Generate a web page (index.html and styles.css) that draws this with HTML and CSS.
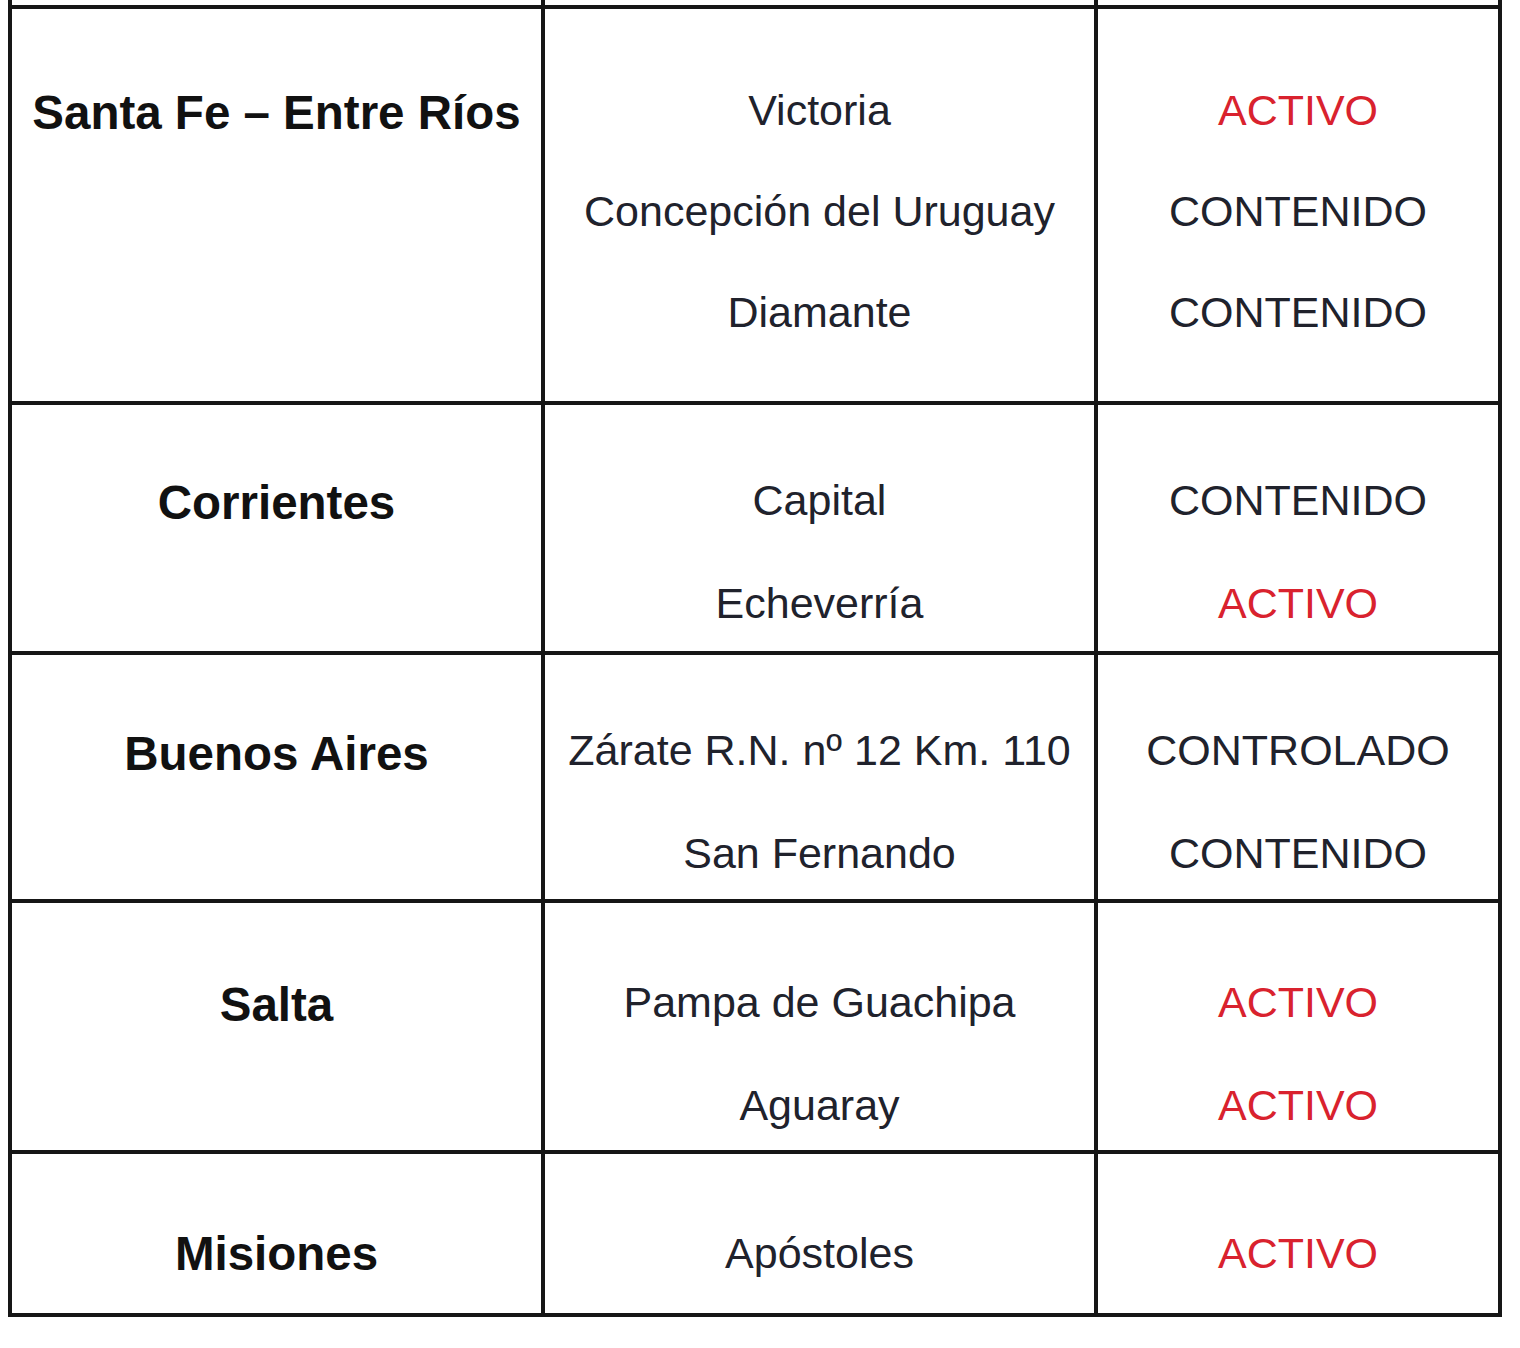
FILE: index.html
```html
<!DOCTYPE html>
<html lang="es">
<head>
<meta charset="utf-8">
<title>Estado</title>
<link rel="stylesheet" href="styles.css">
</head>
<body>
<div class="page">
<table class="grid">
  <colgroup>
    <col class="c1"><col class="c2"><col class="c3">
  </colgroup>
  <tr class="stub"><td></td><td></td><td></td></tr>
  <tr class="r1">
    <td class="prov">Santa Fe – Entre Ríos</td>
    <td class="loc"><div class="ln">Victoria</div><div class="ln">Concepción del Uruguay</div><div class="ln">Diamante</div></td>
    <td class="st"><div class="ln red">ACTIVO</div><div class="ln">CONTENIDO</div><div class="ln">CONTENIDO</div></td>
  </tr>
  <tr class="r2">
    <td class="prov">Corrientes</td>
    <td class="loc"><div class="ln">Capital</div><div class="ln">Echeverría</div></td>
    <td class="st"><div class="ln">CONTENIDO</div><div class="ln red">ACTIVO</div></td>
  </tr>
  <tr class="r3">
    <td class="prov">Buenos Aires</td>
    <td class="loc"><div class="ln">Zárate R.N. nº 12 Km. 110</div><div class="ln">San Fernando</div></td>
    <td class="st"><div class="ln">CONTROLADO</div><div class="ln">CONTENIDO</div></td>
  </tr>
  <tr class="r4">
    <td class="prov">Salta</td>
    <td class="loc"><div class="ln">Pampa de Guachipa</div><div class="ln">Aguaray</div></td>
    <td class="st"><div class="ln red">ACTIVO</div><div class="ln red">ACTIVO</div></td>
  </tr>
  <tr class="r5">
    <td class="prov">Misiones</td>
    <td class="loc"><div class="ln">Apóstoles</div></td>
    <td class="st"><div class="ln red">ACTIVO</div></td>
  </tr>
</table>
</div>
</body>
</html>
```
FILE: styles.css
```css
html, body {
  margin: 0;
  padding: 0;
  background: #ffffff;
}
.page {
  padding-left: 8px;
  font-family: "Liberation Sans", Arial, sans-serif;
}
.grid {
  border-collapse: separate;
  border-spacing: 0;
  table-layout: fixed;
  width: 1494px;
}
.c1 { width: 537px; }
.c2 { width: 553px; }
.c3 { width: 404px; }
.grid td {
  box-sizing: border-box;
  border-right: 4px solid #161616;
  border-bottom: 4px solid #161616;
  vertical-align: top;
  text-align: center;
  padding: 0;
}
.grid td:first-child {
  border-left: 4px solid #161616;
}
.stub td { height: 9px; }
.r1 td { height: 396px; padding-top: 71px; }
.r2 td { height: 250px; padding-top: 65px; }
.r3 td { height: 248px; padding-top: 65px; }
.r4 td { height: 251px; padding-top: 69px; }
.r5 td { height: 163px; padding-top: 69px; }
.grid td.prov {
  font-weight: bold;
  font-size: 47.5px;
  line-height: 60px;
  color: #111111;
}
.r1 td.prov { padding-top: 74px; }
.r2 td.prov { padding-top: 68px; }
.r3 td.prov { padding-top: 69px; }
.r4 td.prov { padding-top: 72px; }
.r5 td.prov { padding-top: 70px; }
.ln {
  font-size: 43px;
  line-height: 60px;
  color: #20222c;
  white-space: nowrap;
}
.ln + .ln { margin-top: 43px; }
.r1 .ln + .ln { margin-top: 41px; }
.red { color: #d9222e; }
```
